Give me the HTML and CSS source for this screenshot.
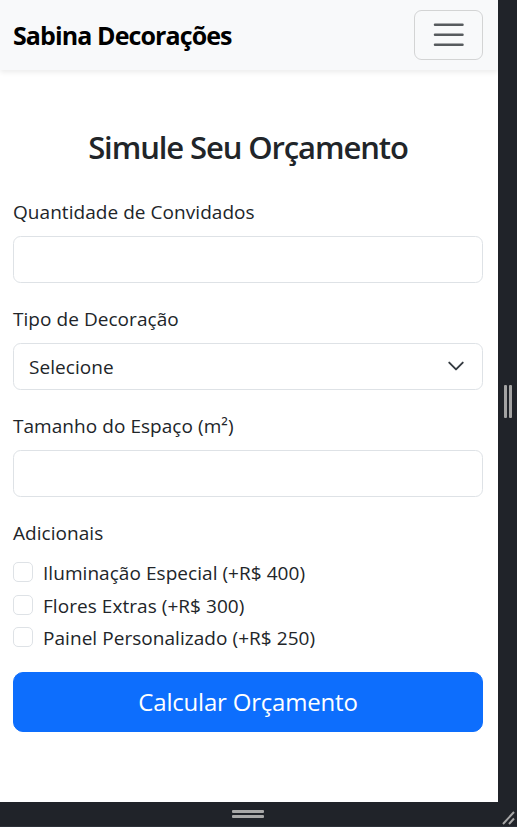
FILE: index.html
```html
<!DOCTYPE html>
<html lang="pt-BR">
<head>
<meta charset="utf-8">
<title>Sabina Decorações</title>
<link rel="stylesheet" href="styles.css">
</head>
<body>
<div class="frame">
  <div class="viewport">
    <div class="page">
      <nav class="navbar">
        <span class="brand">Sabina Decorações</span>
        <button class="toggler" type="button" aria-label="Menu">
          <svg class="toggler-icon" viewBox="0 0 30 30" width="37.5" height="37.5">
            <path d="M4 7h22M4 15h22M4 23h22" stroke="rgba(33,37,41,0.75)" stroke-width="2" stroke-linecap="round" fill="none"/>
          </svg>
        </button>
      </nav>
      <main class="container">
        <h2 class="title">Simule Seu Orçamento</h2>
        <form class="form">
          <div class="field">
            <label class="label" for="convidados">Quantidade de Convidados</label>
            <input class="control" id="convidados" type="number">
          </div>
          <div class="field">
            <label class="label" for="tipo">Tipo de Decoração</label>
            <div class="select-wrap">
              <select class="control select" id="tipo">
                <option>Selecione</option>
              </select>
              <svg class="chevron" viewBox="0 0 16 16" width="18" height="18">
                <path d="m2 5 6 6 6-6" fill="none" stroke="#343a40" stroke-width="1.7" stroke-linecap="round" stroke-linejoin="round"/>
              </svg>
            </div>
          </div>
          <div class="field">
            <label class="label" for="tamanho">Tamanho do Espaço (m²)</label>
            <input class="control" id="tamanho" type="number">
          </div>
          <div class="field">
            <span class="label">Adicionais</span>
            <label class="check"><input type="checkbox" class="box"><span>Iluminação Especial (+R$ 400)</span></label>
            <label class="check"><input type="checkbox" class="box"><span>Flores Extras (+R$ 300)</span></label>
            <label class="check"><input type="checkbox" class="box"><span>Painel Personalizado (+R$ 250)</span></label>
          </div>
          <button type="button" class="btn">Calcular Orçamento</button>
        </form>
      </main>
    </div>
    <div class="side-strip">
      <span class="vbar"></span><span class="vbar"></span>
    </div>
  </div>
  <div class="bottom-strip">
    <div class="bottom-handle-area">
      <div class="hbars"><span class="hbar"></span><span class="hbar"></span></div>
    </div>
    <div class="corner">
      <svg viewBox="0 0 19 25" width="19" height="25">
        <path d="M5 22 L16 10 M11 22 L16 16.5" stroke="#a6a6a6" stroke-width="2" fill="none"/>
      </svg>
    </div>
  </div>
</div>
</body>
</html>
```

FILE: styles.css
```css
* { box-sizing: border-box; }
html, body { margin: 0; padding: 0; }
body {
  font-family: "Open Sans", "Noto Sans", sans-serif;
  color: #212529;
  background: #202329;
  width: 517px;
  height: 827px;
  overflow: hidden;
}
.frame {
  display: flex;
  flex-direction: column;
  width: 517px;
  height: 827px;
}
.viewport {
  display: flex;
  height: 802px;
}
.page {
  width: 498px;
  height: 802px;
  background: #fff;
  overflow: hidden;
}
.side-strip {
  width: 19px;
  background: #202329;
  display: flex;
  align-items: center;
  justify-content: center;
  gap: 2px;
  padding-left: 1px;
}
.vbar {
  width: 3px;
  height: 33px;
  background: #a3a3a3;
  border-radius: 1px;
}
.bottom-strip {
  height: 25px;
  display: flex;
  background: #202329;
  border-bottom: 1px solid #2c3038;
}
.bottom-handle-area {
  width: 498px;
  display: flex;
  align-items: center;
  justify-content: center;
}
.hbars {
  display: flex;
  flex-direction: column;
  gap: 2px;
  margin-left: -2px;
}
.hbar {
  width: 32px;
  height: 3px;
  background: #a8a8a8;
  border-radius: 1px;
}
.corner { width: 19px; display: flex; }

.navbar {
  height: 70px;
  background: #f8f9fa;
  box-shadow: 0 2.5px 5px rgba(0,0,0,0.075);
  display: flex;
  align-items: center;
  justify-content: space-between;
  padding: 0 15px 0 13px;
  position: relative;
}
.brand {
  font-size: 25px;
  font-weight: 700;
  color: #000;
  letter-spacing: -0.9px;
  margin-top: -1px;
}
.toggler {
  width: 69px;
  height: 50px;
  border: 1px solid rgba(0,0,0,0.15);
  border-radius: 7.5px;
  background: transparent;
  padding: 0;
  display: flex;
  align-items: center;
  justify-content: center;
  margin-top: -1px;
}
.toggler-icon { display: block; }

.container {
  padding: 0 15px 0 13px;
}
.title {
  margin: 58px 0 30px;
  font-size: 31px;
  font-weight: 600;
  line-height: 38px;
  text-align: center;
  letter-spacing: -1.1px;
}
.form { display: flex; flex-direction: column; }
.field {
  display: flex;
  flex-direction: column;
  margin-bottom: 20px;
}
.label {
  font-size: 19px;
  line-height: 30px;
  padding-top: 1px;
  margin-bottom: 9px;
  letter-spacing: 0.05px;
}
.control {
  height: 47px;
  width: 100%;
  border: 1px solid #dee2e6;
  border-radius: 7.5px;
  padding: 0 15px;
  font-family: inherit;
  font-size: 19px;
  color: #212529;
  background: #fff;
}
.select-wrap { position: relative; }
.select {
  appearance: none;
  -webkit-appearance: none;
  letter-spacing: 0.05px;
}
.chevron {
  position: absolute;
  right: 18px;
  top: 14px;
  pointer-events: none;
}
.check {
  display: flex;
  align-items: center;
  gap: 10px;
  height: 30px;
  margin-bottom: 2.5px;
  font-size: 19px;
  letter-spacing: 0.05px;
}
.check span { padding-top: 2px; }
.box {
  appearance: none;
  -webkit-appearance: none;
  width: 20px;
  height: 20px;
  margin: 0;
  border: 1px solid #dee2e6;
  border-radius: 5px;
  background: #fff;
  flex: none;
}
.btn {
  height: 60px;
  width: 100%;
  border: 1px solid #0d6efd;
  background: #0d6efd;
  color: #fff;
  border-radius: 10px;
  font-family: inherit;
  font-size: 24px;
  letter-spacing: -0.2px;
  margin-top: -3px;
}
```
